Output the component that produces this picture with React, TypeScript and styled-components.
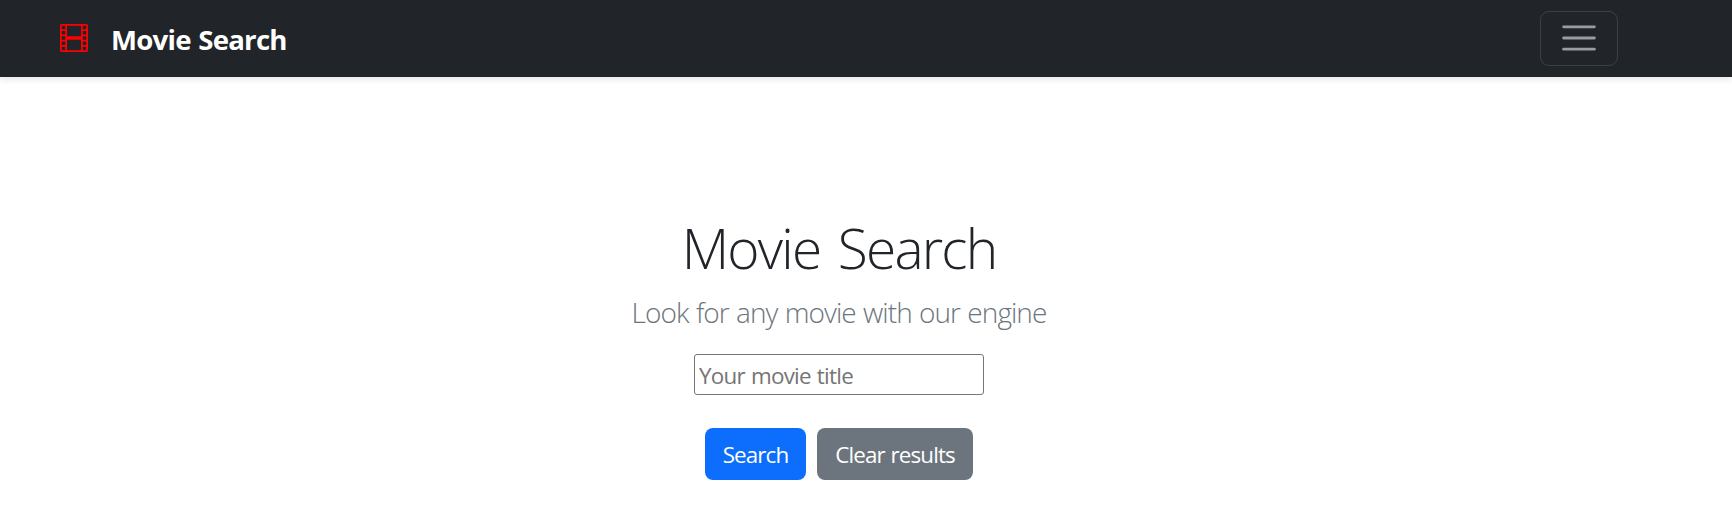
import React from "react";
import styled, { createGlobalStyle } from "styled-components";

const GlobalStyle = createGlobalStyle`
  * { box-sizing: border-box; }
  body {
    margin: 0;
    background: #fff;
    color: #212529;
    font-family: "Segoe UI", "Open Sans", "Noto Sans", sans-serif;
    font-size: 22.4px;
  }
`;

const Navbar = styled.header`
  display: flex;
  align-items: center;
  justify-content: space-between;
  height: 77px;
  padding: 0 114px 0 60px;
  background: #212529;
  box-shadow: 0 3px 6px rgba(0, 0, 0, 0.09);
`;

const Brand = styled.a`
  display: flex;
  align-items: center;
  gap: 23px;
  padding-bottom: 2px;
  color: #fff;
  text-decoration: none;
`;

const BrandName = styled.strong`
  font-size: 27.6px;
  font-weight: 700;
  line-height: 42px;
  letter-spacing: -0.75px;
  word-spacing: 1px;
  white-space: nowrap;
  padding-top: 3px;
`;

const FilmIcon = styled.svg`
  width: 28px;
  height: 28px;
  fill: #f00;
`;

const Toggler = styled.button`
  display: flex;
  align-items: center;
  justify-content: center;
  width: 78px;
  height: 55px;
  padding: 0 0 2px;
  border: 1px solid rgba(255, 255, 255, 0.12);
  border-radius: 9px;
  background: transparent;
`;

const MenuIcon = styled.svg`
  width: 42px;
  height: 42px;
  stroke: rgba(255, 255, 255, 0.55);
  stroke-width: 2;
  stroke-linecap: round;
`;

const Hero = styled.main`
  display: flex;
  flex-direction: column;
  align-items: center;
  padding: 133px 54px 0 0;
`;

const Title = styled.h1`
  margin: 0;
  font-size: 55px;
  font-weight: 300;
  line-height: 76px;
  letter-spacing: -1.8px;
  word-spacing: 5px;
  white-space: nowrap;
`;

const Lead = styled.p`
  margin: 4px 0 0;
  color: #6c757d;
  font-size: 28px;
  font-weight: 300;
  line-height: 44px;
  letter-spacing: -0.95px;
  word-spacing: 1px;
  white-space: nowrap;
`;

const MovieInput = styled.input`
  width: 290px;
  height: 41px;
  margin-top: 20px;
  padding: 2px 3px 0 4px;
  border: 1px solid #767676;
  border-radius: 3px;
  background: #fff;
  font-family: inherit;
  font-size: 22.4px;
  letter-spacing: -0.75px;
  word-spacing: 1px;

  &::placeholder {
    color: #757575;
    opacity: 1;
  }
`;

const Actions = styled.div`
  display: flex;
  gap: 11px;
  margin-top: 33px;
`;

const Button = styled.button<{ $variant: "primary" | "secondary" }>`
  width: ${({ $variant }) => ($variant === "primary" ? 101 : 156)}px;
  height: 52px;
  padding: 1px 0 0;
  border: 0;
  border-radius: 8px;
  background: ${({ $variant }) => ($variant === "primary" ? "#0d6efd" : "#6c757d")};
  color: #fff;
  font-family: inherit;
  font-size: 22.4px;
  letter-spacing: -0.9px;
  word-spacing: 1px;
  white-space: nowrap;
`;

export default function App() {
  return (
    <>
      <GlobalStyle />
      <Navbar>
        <Brand>
          <FilmIcon viewBox="0 0 16 16" aria-hidden="true">
            <path d="M0 1a1 1 0 0 1 1-1h14a1 1 0 0 1 1 1v14a1 1 0 0 1-1 1H1a1 1 0 0 1-1-1V1zm4 0v6h8V1H4zm8 8H4v6h8V9zM1 1v2h2V1H1zm2 3H1v2h2V4zM1 7v2h2V7H1zm2 3H1v2h2v-2zm-2 3v2h2v-2H1zM15 1h-2v2h2V1zm-2 3v2h2V4h-2zm2 3h-2v2h2V7zm-2 3v2h2v-2h-2zm2 3h-2v2h2v-2z" />
          </FilmIcon>
          <BrandName>Movie Search</BrandName>
        </Brand>
        <Toggler type="button" aria-label="Toggle navigation">
          <MenuIcon viewBox="0 0 30 30" aria-hidden="true">
            <path d="M4 7h22M4 15h22M4 23h22" />
          </MenuIcon>
        </Toggler>
      </Navbar>
      <Hero>
        <Title>Movie Search</Title>
        <Lead>Look for any movie with our engine</Lead>
        <MovieInput type="text" placeholder="Your movie title" />
        <Actions>
          <Button type="button" $variant="primary">Search</Button>
          <Button type="button" $variant="secondary">Clear results</Button>
        </Actions>
      </Hero>
    </>
  );
}
